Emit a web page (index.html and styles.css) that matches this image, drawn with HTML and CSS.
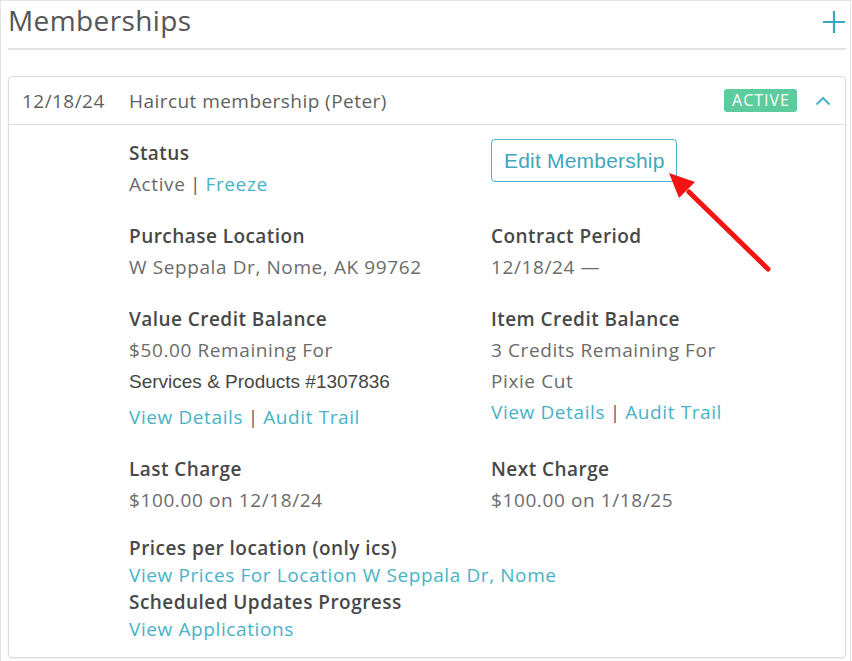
FILE: index.html
```html
<!DOCTYPE html>
<html>
<head>
<meta charset="utf-8">
<link rel="stylesheet" href="styles.css">
</head>
<body>
<div class="panel">
  <div class="panel-head">
    <h2 class="panel-title">Memberships</h2>
    <svg class="add-icon" width="24" height="24" viewBox="0 0 24 24"><path d="M12 1v22M1 12h22" stroke="#3aa7c1" stroke-width="2.2" fill="none"/></svg>
  </div>
  <div class="card">
    <div class="card-head">
      <span class="card-date">12/18/24</span>
      <span class="card-name">Haircut membership (Peter)</span>
      <span class="badge">ACTIVE</span>
      <svg class="chevron" width="16" height="10" viewBox="0 0 16 10"><path d="M1.5 8.5L8 2l6.5 6.5" stroke="#4ab3c8" stroke-width="2" fill="none"/></svg>
    </div>
    <div class="card-body">
      <div class="field">
        <div class="label">Status</div>
        <div class="value">Active <span class="sep">|</span> <a class="link">Freeze</a></div>
      </div>
      <div class="field">
        <button class="edit-btn">Edit Membership</button>
      </div>
      <div class="field">
        <div class="label">Purchase Location</div>
        <div class="value">W Seppala Dr, Nome, AK 99762</div>
      </div>
      <div class="field">
        <div class="label">Contract Period</div>
        <div class="value">12/18/24 —</div>
      </div>
      <div class="field">
        <div class="label">Value Credit Balance</div>
        <div class="value">$50.00 Remaining For</div>
        <div class="value alt">Services &amp; Products #1307836</div>
        <div class="value links-gap"><a class="link">View Details</a> <span class="sep">|</span> <a class="link">Audit Trail</a></div>
      </div>
      <div class="field">
        <div class="label">Item Credit Balance</div>
        <div class="value">3 Credits Remaining For</div>
        <div class="value">Pixie Cut</div>
        <div class="value"><a class="link">View Details</a> <span class="sep">|</span> <a class="link">Audit Trail</a></div>
      </div>
      <div class="field">
        <div class="label">Last Charge</div>
        <div class="value">$100.00 on 12/18/24</div>
      </div>
      <div class="field">
        <div class="label">Next Charge</div>
        <div class="value">$100.00 on 1/18/25</div>
      </div>
      <div class="field wide compact">
        <div class="label">Prices per location (only ics)</div>
        <div class="value"><a class="link">View Prices For Location W Seppala Dr, Nome</a></div>
        <div class="label">Scheduled Updates Progress</div>
        <div class="value"><a class="link">View Applications</a></div>
      </div>
    </div>
  </div>
  <svg class="arrow" width="120" height="120" viewBox="0 0 120 120">
    <line x1="107" y1="104" x2="28" y2="27" stroke="#f41414" stroke-width="5" stroke-linecap="round"/>
    <polygon points="8,8 34,17 18,33" fill="#f41414"/>
  </svg>
</div>
</body>
</html>
```
FILE: styles.css
```css
* { box-sizing: border-box; }
html, body { margin: 0; padding: 0; background: #fff; }
body { font-family: "Open Sans", "Liberation Sans", sans-serif; color: #4a4a4a; }

.panel {
  position: relative;
  width: 851px;
  height: 661px;
  border: 1px solid #e3e3e3;
  border-bottom: none;
  padding: 0 4px 0 7px;
  overflow: hidden;
}

.panel-head {
  display: flex;
  justify-content: space-between;
  align-items: center;
  height: 49px;
  border-bottom: 2px solid #e2e2e2;
}
.panel-title {
  margin: 0;
  font-weight: 400;
  font-size: 28px;
  letter-spacing: 0.4px;
  color: #555;
  line-height: 38px;
  margin-top: -9px;
}
.add-icon { margin-top: -5px; }

.card {
  margin-top: 26px;
  border: 1px solid #dcdcdc;
  border-radius: 4px;
  box-shadow: 0 1px 2px rgba(0,0,0,0.08);
  width: 838px;
}
.card-head {
  display: flex;
  align-items: center;
  height: 48px;
  padding: 0 14px 0 13px;
  border-bottom: 1px solid #dcdcdc;
  font-size: 19px;
  letter-spacing: 0.45px;
  color: #5f5f5f;
}
.card-date { width: 107px; }
.card-name { flex: 1; }
.badge {
  background: #5ccb9d;
  color: #fff;
  font-size: 16px;
  letter-spacing: 1px;
  line-height: 23px;
  height: 23px;
  padding: 0 7px 0 8px;
  border-radius: 3px;
  margin-right: 18px;
}
.chevron { display: block; }

.card-body {
  display: grid;
  grid-template-columns: 362px 1fr;
  padding: 13px 0 14px 120px;
  row-gap: 21px;
}
.field { font-size: 19px; letter-spacing: 0.6px; }
.label { font-weight: 600; color: #484848; line-height: 31px; letter-spacing: 0.45px; }
.value { color: #6b6b6b; line-height: 31px; }
.value.alt { font-family: "Liberation Sans", Arial, sans-serif; font-size: 19px; letter-spacing: 0; color: #454545; }
.sep { color: #5a5a5a; margin: 0 -1px 0 -1px; }
.links-gap { margin-top: 5px; }
.link { color: #47b2c7; text-decoration: none; }
.wide { grid-column: 1 / span 2; margin-top: -2px; }
.compact .label, .compact .value { line-height: 27px; }

.edit-btn {
  margin-top: 1px;
  height: 43px;
  padding: 0 11px 0 12px;
  background: #fff;
  border: 1px solid #4ab0c4;
  border-radius: 4px;
  color: #3fa7bd;
  font-family: "Liberation Sans", Arial, sans-serif;
  font-size: 21px;
  letter-spacing: 0.2px;
}

.arrow {
  position: absolute;
  left: 660px;
  top: 164px;
}
```
